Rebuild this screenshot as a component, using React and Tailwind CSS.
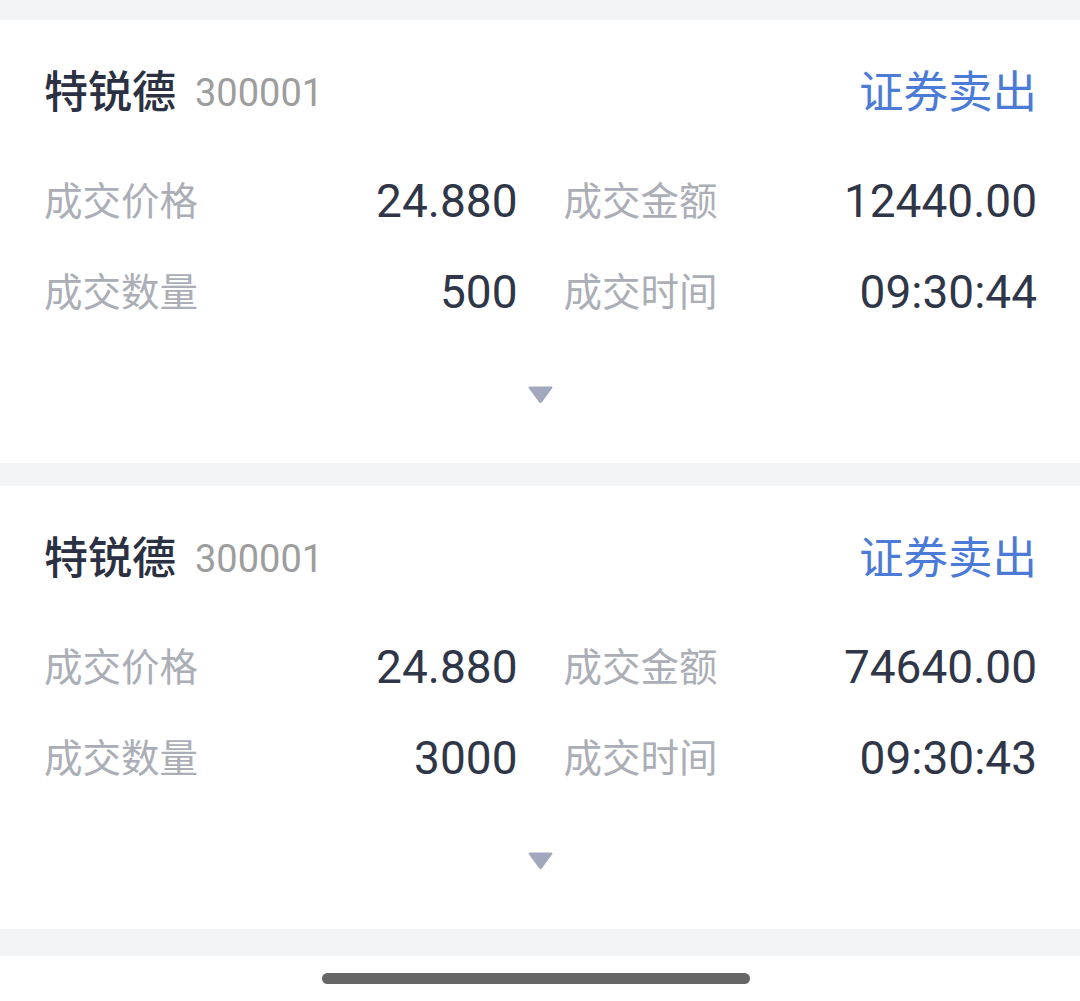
import React from "react";

const trades = [
  { price: "24.880", amount: "12440.00", qty: "500", time: "09:30:44" },
  { price: "24.880", amount: "74640.00", qty: "3000", time: "09:30:43" },
];

function Cell({ label, value }) {
  return (
    <div className="flex items-center justify-between h-[91px]">
      <span className="text-[38.5px] text-[#abaeb6]">{label}</span>
      <span className="text-[46px] text-[#2f3648]">{value}</span>
    </div>
  );
}

function Card({ t }) {
  return (
    <div className="bg-white pl-[44px] pr-[43px] pt-[43px] h-[443px] flex flex-col">
      <div className="flex items-center justify-between h-[60px]">
        <div className="flex items-center">
          <span className="text-[44px] font-medium text-[#2b3142]">特锐德</span>
          <span className="text-[38px] text-[#9d9d9d] ml-[19px]">300001</span>
        </div>
        <span className="text-[44.5px] text-[#4b7bd6]">证券卖出</span>
      </div>
      <div className="grid grid-cols-2 gap-x-[46px] mt-[33px]">
        <Cell label="成交价格" value={t.price} />
        <Cell label="成交金额" value={t.amount} />
        <Cell label="成交数量" value={t.qty} />
        <Cell label="成交时间" value={t.time} />
      </div>
      <div className="flex justify-center mt-[48px]">
        <svg width="25" height="17" viewBox="0 0 25 17">
          <path d="M1.5 1.5 H23.5 L13.3 15.5 Q12.5 16.5 11.7 15.5 Z" fill="#a1a8bd" stroke="#a1a8bd" strokeWidth="2" strokeLinejoin="round" />
        </svg>
      </div>
    </div>
  );
}

export default function App() {
  return (
    <div
      className="w-[1080px] h-[1001px] bg-white overflow-hidden"
      style={{ fontFamily: "Roboto, 'Noto Sans CJK SC', sans-serif" }}
    >
      <div className="h-[20px] bg-[#f3f4f6]" />
      <Card t={trades[0]} />
      <div className="h-[23px] bg-[#f3f4f6]" />
      <Card t={trades[1]} />
      <div className="h-[27px] bg-[#f3f4f6]" />
      <div className="flex justify-center pt-[17px] pr-[8px]">
        <div className="w-[428px] h-[11px] rounded-full bg-[#666666]" />
      </div>
    </div>
  );
}
